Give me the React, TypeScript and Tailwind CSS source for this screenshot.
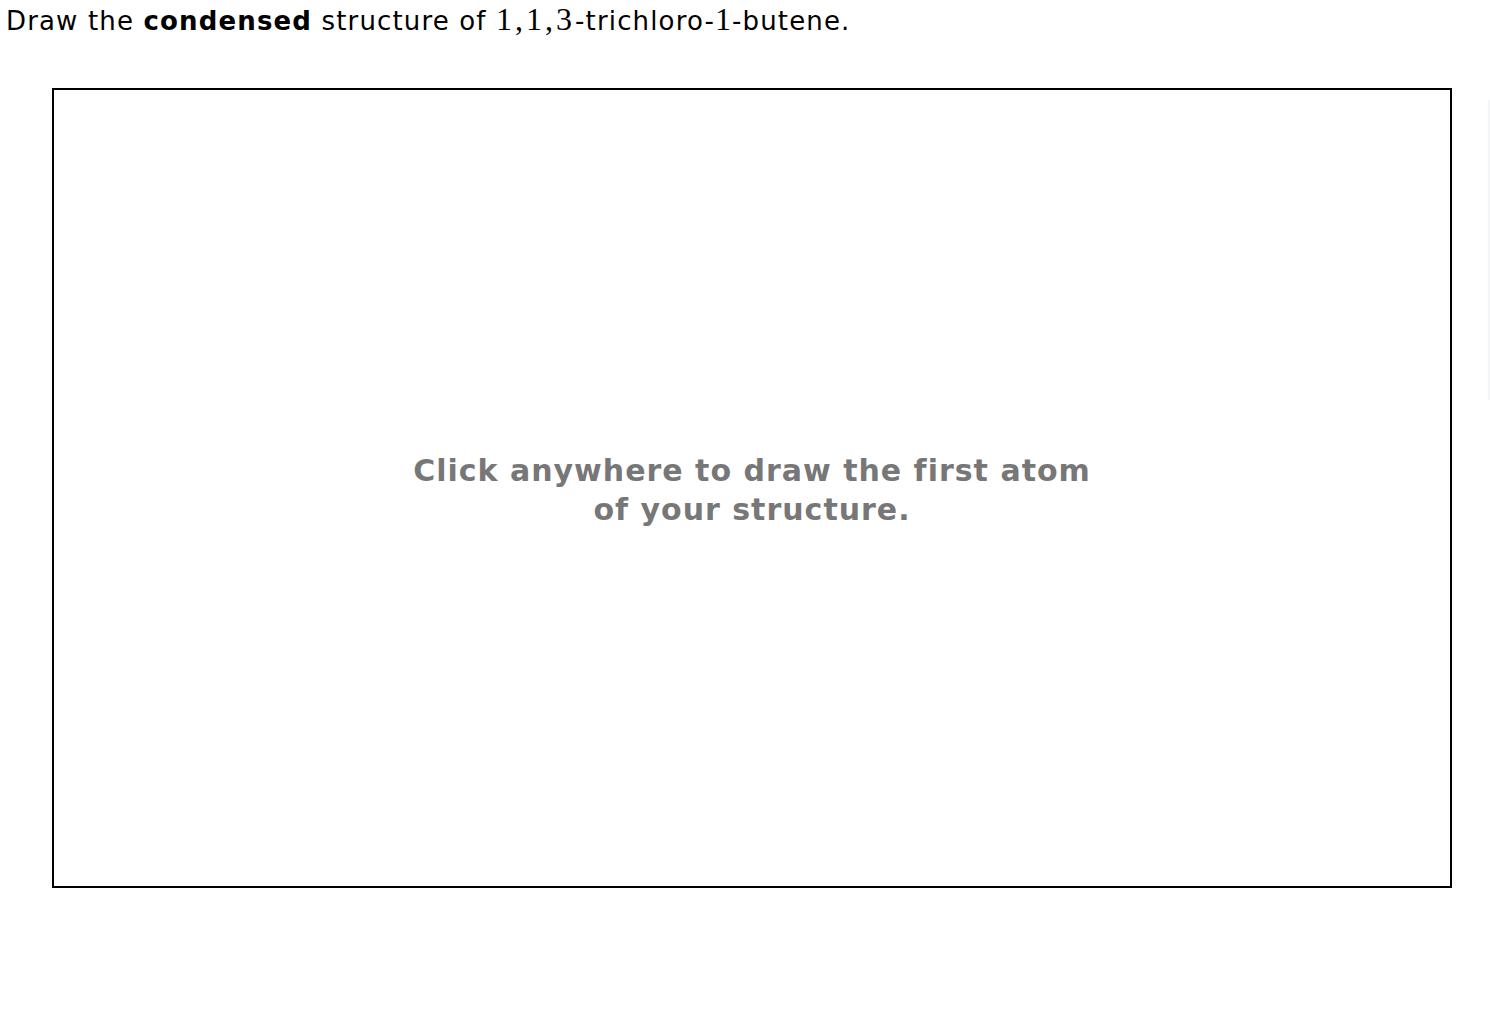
export default function App() {
  return (
    <div className="relative min-h-[1024px] bg-white font-['DejaVu_Sans',Verdana,sans-serif] text-black">
      <p className="pl-[6px] pt-[1px] text-[26px] leading-[36px] tracking-[1.15px]">
        Draw the <b>condensed</b> structure of{' '}
        <span className="font-['Liberation_Serif',serif] text-[32px] tracking-[3px]">1,1,3</span>-trichloro-
        <span className="font-['Liberation_Serif',serif] text-[32px] tracking-[1px]">1</span>-butene.
      </p>
      <div className="ml-[52px] mt-[49px] flex h-[800px] w-[1400px] cursor-crosshair items-center justify-center border-2 border-black">
        <p className="mt-[4px] text-center text-[30px] font-bold leading-[39px] tracking-[1px] text-[#777777]">
          Click anywhere to draw the first atom
          <br />
          of your structure.
        </p>
      </div>
      <div className="absolute right-0 top-[100px] h-[300px] w-[3px] bg-gradient-to-r from-white to-[#eef0f4]" />
    </div>
  );
}
